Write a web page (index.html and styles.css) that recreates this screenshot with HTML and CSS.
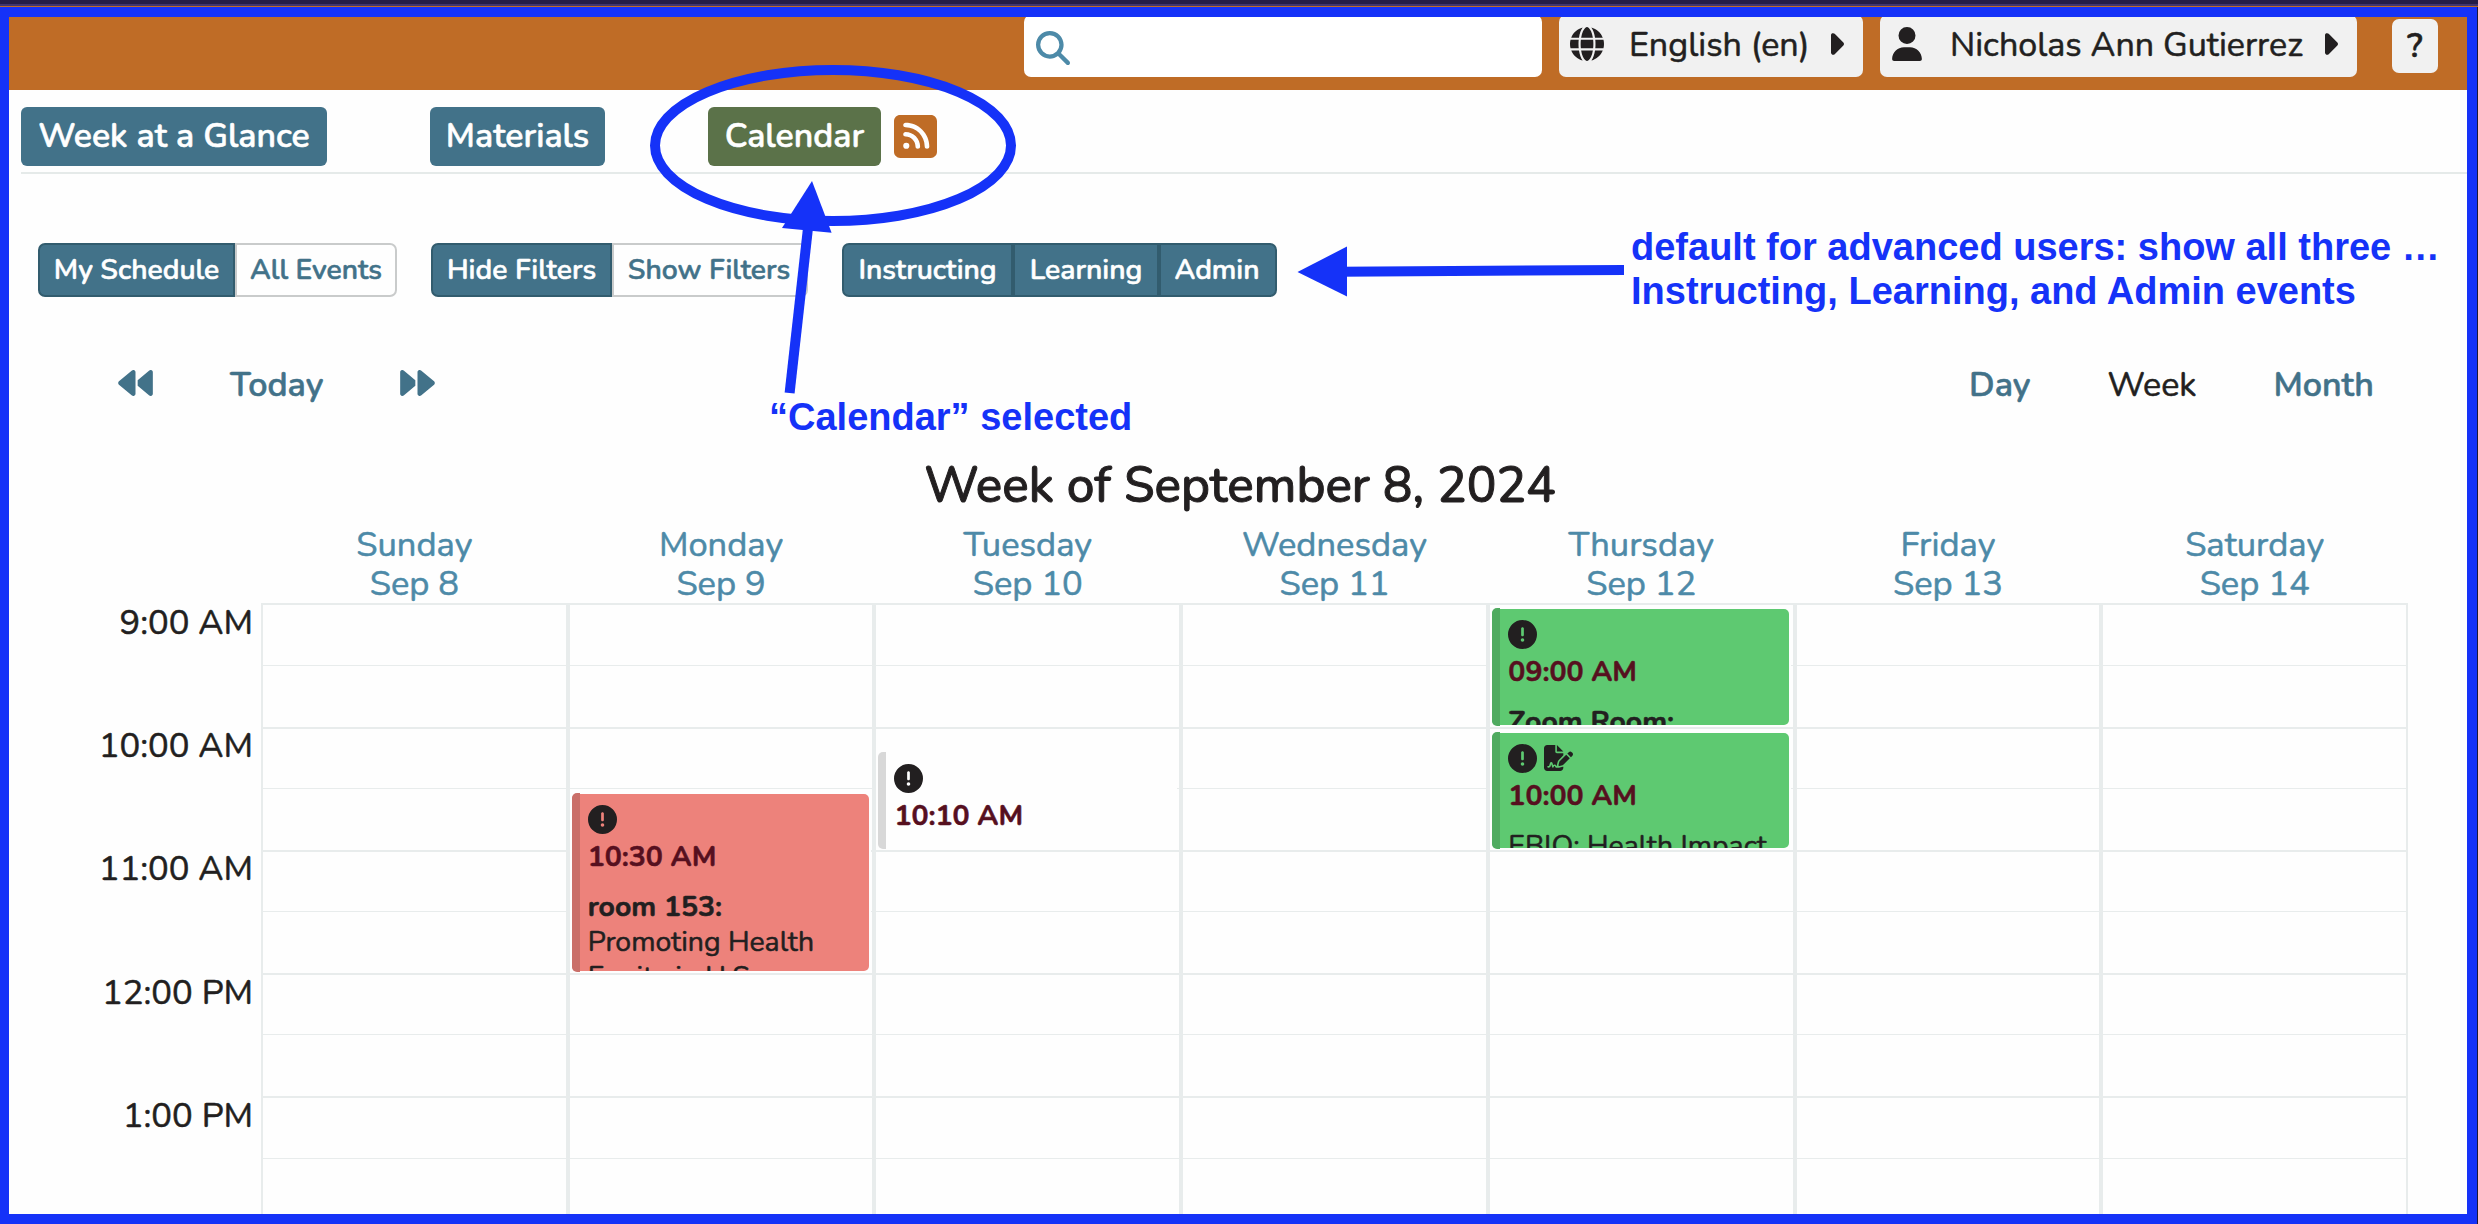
FILE: index.html
```html
<!DOCTYPE html>
<html lang="en">
<head>
<meta charset="utf-8">
<title>Calendar</title>
<link rel="stylesheet" href="styles.css">
</head>
<body>
<svg class="sprite" width="0" height="0" aria-hidden="true">
  <symbol id="search" viewBox="0 0 512 512"><path d="M416 208c0 45.9-14.9 88.3-40 122.7L502.6 457.4c12.5 12.5 12.5 32.8 0 45.3s-32.8 12.5-45.3 0L330.7 376c-34.4 25.2-76.8 40-122.7 40C93.1 416 0 322.9 0 208S93.1 0 208 0S416 93.1 416 208zM208 352a144 144 0 1 0 0-288 144 144 0 1 0 0 288z"/></symbol>
  <symbol id="globe" viewBox="0 0 512 512"><path d="M352 256c0 22.2-1.2 43.6-3.3 64H163.3c-2.2-20.4-3.3-41.8-3.3-64s1.2-43.6 3.3-64H348.7c2.2 20.4 3.3 41.8 3.3 64zm28.8-64H503.9c5.3 20.5 8.1 41.9 8.1 64s-2.8 43.5-8.1 64H380.8c2.1-20.6 3.2-42 3.2-64s-1.1-43.4-3.2-64zm112.6-32H376.7c-10-63.9-29.8-117.4-55.3-151.6c78.3 20.7 142 77.5 171.9 151.6zm-149.1 0H167.7c6.1-36.4 15.5-68.6 27-94.7c10.5-23.6 22.2-40.7 33.5-51.5C239.4 3.2 248.7 0 256 0s16.6 3.2 27.8 13.8c11.3 10.8 23 27.9 33.5 51.5c11.6 26 20.9 58.2 27 94.7zm-209 0H18.6C48.6 85.9 112.2 29.1 190.6 8.4C165.1 42.6 145.3 96.1 135.3 160zM8.1 192H131.2c-2.1 20.6-3.2 42-3.2 64s1.1 43.4 3.2 64H8.1C2.8 299.5 0 278.1 0 256s2.8-43.5 8.1-64zM194.7 446.6c-11.6-26-20.9-58.2-27-94.6H344.3c-6.1 36.4-15.5 68.6-27 94.6c-10.5 23.6-22.2 40.7-33.5 51.5C272.6 508.8 263.3 512 256 512s-16.6-3.2-27.8-13.8c-11.3-10.8-23-27.9-33.5-51.5zM135.3 352c10 63.9 29.8 117.4 55.3 151.6C112.2 482.9 48.6 426.1 18.6 352H135.3zm358.1 0c-30 74.1-93.6 130.9-171.9 151.6c25.5-34.2 45.2-87.7 55.3-151.6H493.4z"/></symbol>
  <symbol id="user" viewBox="0 0 448 512"><path d="M224 256A128 128 0 1 0 224 0a128 128 0 1 0 0 256zm-45.7 48C79.8 304 0 383.8 0 482.3C0 498.7 13.3 512 29.7 512H418.3c16.4 0 29.7-13.3 29.7-29.7C448 383.8 368.2 304 269.7 304H178.3z"/></symbol>
  <symbol id="caret" viewBox="64 96 192 320"><path d="M246.6 278.6c12.5-12.5 12.5-32.8 0-45.3l-128-128c-9.2-9.2-22.9-11.9-34.9-6.9s-19.8 16.6-19.8 29.6l0 256c0 12.9 7.8 24.6 19.8 29.6s25.7 2.2 34.9-6.9l128-128z"/></symbol>
  <symbol id="backward" viewBox="0 64 512 384"><path d="M459.5 440.6c9.5 7.9 22.8 9.7 34.1 4.4s18.4-16.6 18.4-29V96c0-12.4-7.2-23.7-18.4-29s-24.5-3.6-34.1 4.4L288 214.3V256v41.7L459.5 440.6zM256 352V256 128 96c0-12.4-7.2-23.7-18.4-29s-24.5-3.6-34.1 4.4l-192 160C4.2 237.5 0 246.5 0 256s4.2 18.5 11.5 24.6l192 160c9.5 7.9 22.8 9.7 34.1 4.4s18.4-16.6 18.4-29V352z"/></symbol>
  <symbol id="rss" viewBox="0 32 448 448"><path d="M64 32C28.7 32 0 60.7 0 96V416c0 35.3 28.7 64 64 64H384c35.3 0 64-28.7 64-64V96c0-35.3-28.7-64-64-64H64zM96 136c0-13.3 10.7-24 24-24c137 0 248 111 248 248c0 13.3-10.7 24-24 24s-24-10.7-24-24c0-110.5-89.5-200-200-200c-13.3 0-24-10.7-24-24zm0 96c0-13.3 10.7-24 24-24c83.9 0 152 68.1 152 152c0 13.3-10.7 24-24 24s-24-10.7-24-24c0-57.4-46.6-104-104-104c-13.3 0-24-10.7-24-24zm0 120a32 32 0 1 1 64 0 32 32 0 1 1 -64 0z"/></symbol>
  <symbol id="alert" viewBox="0 0 512 512"><path d="M256 512A256 256 0 1 0 256 0a256 256 0 1 0 0 512zm0-384c13.3 0 24 10.7 24 24V264c0 13.3-10.7 24-24 24s-24-10.7-24-24V152c0-13.3 10.7-24 24-24zM224 352a32 32 0 1 1 64 0 32 32 0 1 1 -64 0z"/></symbol>
  <symbol id="signature" viewBox="0 0 576 512"><path d="M64 0C28.7 0 0 28.7 0 64V448c0 35.3 28.7 64 64 64H320c35.3 0 64-28.7 64-64V428.7c-2.7 1.1-5.4 2-8.2 2.7l-60.1 15c-3 .7-6 1.2-9 1.4c-.9 .1-1.8 .2-2.7 .2H240c-6.1 0-11.6-3.4-14.3-8.8l-8.8-17.7c-1.7-3.4-5.1-5.5-8.8-5.5s-7.2 2.1-8.8 5.5l-8.8 17.7c-2.9 5.9-9.2 9.4-15.7 8.8s-12.1-5.1-13.9-11.3L144 381l-9.8 32.8c-6.1 20.3-24.8 34.2-46 34.2H80c-8.8 0-16-7.2-16-16s7.2-16 16-16h8.2c7.1 0 13.3-4.6 15.3-11.4l14.9-49.5c3.4-11.3 13.8-19.1 25.6-19.1s22.2 7.8 25.6 19.1l11.6 38.6c7.4-6.2 16.8-9.7 26.8-9.7c15.9 0 30.4 9 37.5 23.2l4.4 8.8h8.9c-3.1-8.8-3.7-18.4-1.4-27.8l15-60.1c2.8-11.3 8.6-21.5 16.8-29.7L384 203.6V160H256c-17.7 0-32-14.3-32-32V0H64zM256 0V128H384L256 0zM549.8 139.7c-15.6-15.6-40.9-15.6-56.6 0l-29.4 29.4 71 71 29.4-29.4c15.6-15.6 15.6-40.9 0-56.6l-14.4-14.4zM311.9 321c-4.1 4.1-7 9.2-8.4 14.9l-15 60.1c-1.4 5.5 .2 11.2 4.2 15.2s9.7 5.6 15.2 4.2l60.1-15c5.6-1.4 10.8-4.3 14.9-8.4L512.1 262.7l-71-71L311.9 321z"/></symbol>
</svg>

<div class="strip"></div>
<div class="frame">
  <header class="header">
    <div class="search"><svg class="icon-search"><use href="#search"/></svg></div>
    <button class="menu menu-lang"><svg class="icon-globe"><use href="#globe"/></svg><span class="menu-label">English (en)</span><svg class="icon-caret"><use href="#caret"/></svg></button>
    <button class="menu menu-user"><svg class="icon-user"><use href="#user"/></svg><span class="menu-label">Nicholas Ann Gutierrez</span><svg class="icon-caret"><use href="#caret"/></svg></button>
    <button class="help">?</button>
  </header>

  <nav class="nav">
    <a class="tab tab-week">Week at a Glance</a>
    <a class="tab tab-materials">Materials</a>
    <a class="tab tab-calendar">Calendar</a>
    <svg class="icon-rss"><use href="#rss"/></svg>
  </nav>

  <div class="filters">
    <div class="group">
      <span class="toggle on w-my">My Schedule</span><span class="toggle w-all">All Events</span>
    </div>
    <div class="group">
      <span class="toggle on w-hide">Hide Filters</span><span class="toggle w-show">Show Filters</span>
    </div>
    <div class="group">
      <span class="toggle on w-inst">Instructing</span><span class="toggle on w-learn">Learning</span><span class="toggle on w-admin">Admin</span>
    </div>
  </div>

  <div class="toolbar">
    <div class="pager">
      <svg class="icon-skip"><use href="#backward"/></svg>
      <a>Today</a>
      <svg class="icon-skip flip"><use href="#backward"/></svg>
    </div>
    <div class="views"><a>Day</a><span class="current">Week</span><a>Month</a></div>
  </div>

  <h1 class="title">Week of September 8, 2024</h1>

  <div class="days">
    <div>Sunday<br>Sep 8</div><div>Monday<br>Sep 9</div><div>Tuesday<br>Sep 10</div><div>Wednesday<br>Sep 11</div><div>Thursday<br>Sep 12</div><div>Friday<br>Sep 13</div><div>Saturday<br>Sep 14</div>
  </div>

  <div class="calendar">
    <div class="hours"><div>9:00 AM</div><div>10:00 AM</div><div>11:00 AM</div><div>12:00 PM</div><div>1:00 PM</div></div>
    <div class="week">
      <div class="day"><i></i><i></i><i></i><i></i><i></i><i></i><i></i><i></i><i></i><i></i></div>
      <div class="day"><i></i><i></i><i></i><i></i><i></i><i></i><i></i><i></i><i></i><i></i>
        <div class="event red mon"><div class="body">
          <div class="marks"><svg class="icon-alert"><use href="#alert"/></svg></div>
          <div class="time">10:30 AM</div>
          <div class="text"><b>room 153:</b><br>Promoting Health<br>Equity in U.S.</div>
        </div></div>
      </div>
      <div class="day"><i></i><i></i><i></i><i></i><i></i><i></i><i></i><i></i><i></i><i></i>
        <div class="event white tue"><div class="body">
          <div class="marks"><svg class="icon-alert"><use href="#alert"/></svg></div>
          <div class="time">10:10 AM</div>
        </div></div>
      </div>
      <div class="day"><i></i><i></i><i></i><i></i><i></i><i></i><i></i><i></i><i></i><i></i></div>
      <div class="day"><i></i><i></i><i></i><i></i><i></i><i></i><i></i><i></i><i></i><i></i>
        <div class="event green thu-9"><div class="body">
          <div class="marks"><svg class="icon-alert"><use href="#alert"/></svg></div>
          <div class="time">09:00 AM</div>
          <div class="text"><b>Zoom Room:</b></div>
        </div></div>
        <div class="event green thu-10"><div class="body">
          <div class="marks"><svg class="icon-alert"><use href="#alert"/></svg><svg class="icon-sign"><use href="#signature"/></svg></div>
          <div class="time">10:00 AM</div>
          <div class="text">EBIO: Health Impact</div>
        </div></div>
      </div>
      <div class="day"><i></i><i></i><i></i><i></i><i></i><i></i><i></i><i></i><i></i><i></i></div>
      <div class="day"><i></i><i></i><i></i><i></i><i></i><i></i><i></i><i></i><i></i><i></i></div>
    </div>
  </div>
</div>

<!-- Callouts drawn over the page -->
<svg class="callouts" viewBox="0 0 2478 1224">
  <ellipse cx="833" cy="145.5" rx="178" ry="75.5"/>
  <path d="M808 228L789.6 393"/>
  <path d="M1340 271.7L1624 270"/>
  <polygon points="812,181 782,228 831.6,232.8"/>
  <polygon points="1297.5,272 1347,246.5 1347,296.5"/>
</svg>
<div class="note note-selected">“Calendar” selected</div>
<div class="note note-default">default for advanced users: show all three …<br>Instructing, Learning, and Admin events</div>
</body>
</html>
```
FILE: styles.css
```css
* { box-sizing: border-box; }
html, body { margin: 0; height: 100%; overflow: hidden; }
body {
  position: relative;
  width: 2478px;
  height: 1224px;
  background: #1a1838;
  color: #221f20;
  font-family: Nunito, Lato, "Noto Sans", sans-serif;
  font-size: 34.5px;
  -webkit-text-stroke: .55px currentColor;
}
svg { display: block; fill: currentColor; flex: none; }
.sprite { position: absolute; }

.strip {
  height: 7px;
  background: linear-gradient(#241d47 4px, #40356f 4px 6px, #bf6c26 6px);
}
.frame {
  width: 2477px;
  height: 1217px;
  border: 10px solid #1532f8;
  border-left-width: 9px;
  background: #fefefe;
  overflow: hidden;
}

/* Header */
.header {
  display: flex;
  align-items: flex-start;
  gap: 17px;
  height: 73px;
  padding-left: 1015px;
  background: #bf6c26;
  overflow: hidden;
}
.search, .menu {
  display: flex;
  align-items: center;
  height: 62px;
  margin-top: -2px;
  border: 0;
  border-radius: 7px;
  background: #f1f1f1;
}
.search { width: 518px; padding-left: 12px; background: #fff; color: #4d8aa8; }
.icon-search { width: 34px; height: 34px; margin-top: 4px; }
.menu, .help {
  flex: none;
  color: #221f20;
  font: 400 34.1px Nunito, Lato, "Noto Sans", sans-serif;
  white-space: nowrap;
  -webkit-text-stroke: inherit;
}
.menu { padding: 0 19px 0 11px; }
.menu-lang { width: 304px; }
.menu-user { width: 477px; padding-left: 12px; }
.menu-label { margin: 0 auto 2px 0; }
.icon-globe { width: 34px; height: 34px; margin: 0 25px 4px 0; }
.icon-user { width: 30px; height: 34px; margin: 0 28px 4px 0; }
.icon-caret { width: 13px; height: 22px; margin-bottom: 4px; }
.help {
  width: 46px;
  height: 54px;
  margin: 2px 0 0 18px;
  padding: 0;
  border: 0;
  border-radius: 7px;
  background: #f1f1f1;
  font-weight: 600;
  line-height: 50px;
}

/* Navigation */
.nav {
  display: flex;
  height: 84px;
  margin-left: 12px;
  padding-top: 17px;
  border-bottom: 2px solid #e5eae9;
}
.tab {
  height: 59px;
  margin-right: 103px;
  border-radius: 6px;
  background: #427289;
  color: #fff;
  font-size: 33.9px;
  font-weight: 600;
  line-height: 58px;
  text-align: center;
  white-space: nowrap;
}
.tab-week { width: 306px; }
.tab-materials { width: 175px; }
.tab-calendar { width: 173px; margin-right: 13px; background: #5b7249; }
.icon-rss { width: 43px; height: 43px; margin-top: 8px; color: #bf6c26; }

/* Filter groups */
.filters {
  display: flex;
  gap: 34px;
  margin: 69px 0 0 29px;
}
.group { display: flex; }
.toggle {
  height: 54px;
  border: 2px solid #c9cbcb;
  background: #fefefe;
  color: #427289;
  font-size: 28.3px;
  font-weight: 600;
  line-height: 50px;
  text-align: center;
  white-space: nowrap;
}
.toggle.on { border-color: #325c6e; background: #427289; color: #fff; }
.toggle:first-child { border-radius: 7px 0 0 7px; }
.toggle:last-child { border-radius: 0 7px 7px 0; }
.w-my { width: 197px; }
.w-all { width: 162px; }
.w-hide { width: 181px; }
.w-show { width: 196px; padding-right: 2px; }
.w-inst { width: 171px; }
.w-learn { width: 146px; }
.w-admin { width: 118px; padding-right: 2px; }

/* Toolbar */
.toolbar {
  display: flex;
  justify-content: space-between;
  height: 40px;
  margin-top: 68px;
  padding: 0 93px 0 109px;
  color: #427289;
  font-size: 34.1px;
  font-weight: 600;
  line-height: 40px;
}
.pager { display: flex; gap: 77px; }
.icon-skip { width: 35px; height: 26px; margin-top: 5px; }
.flip { transform: scaleX(-1); }
.views { display: flex; gap: 77px; }
.current { color: #221f20; font-weight: 400; }

/* Week heading */
.title {
  height: 60px;
  margin: 51px 0 0;
  padding-left: 4px;
  font-size: 49.5px;
  font-weight: 500;
  line-height: 60px;
  text-align: center;
  -webkit-text-stroke-width: 1px;
}
.days {
  display: grid;
  grid-template-columns: repeat(7, 1fr);
  width: 2147px;
  margin: 8.5px 0 0 252px;
  color: #4d8aa8;
  line-height: 39px;
  text-align: center;
}

/* Calendar grid */
.calendar { display: flex; margin-top: .5px; }
.hours {
  width: 252px;
  padding-right: 8px;
  text-align: right;
  line-height: 39px;
}
.hours div { height: 123.2px; }
.week {
  display: grid;
  grid-template-columns: repeat(7, 1fr);
  width: 2147px;
}
.day {
  position: relative;
  display: grid;
  grid-template-rows: 62px 62px 61px 62px 61px 62px 61px 62px 62px 62px;
  border: solid #e8ecec;
  border-width: 0 2px;
}
.day i { border-top: 1px solid #e8ecec; }
.day i:nth-child(odd) { border-top-width: 2px; }

/* Events */
.event {
  position: absolute;
  left: 2px;
  width: 297px;
  border-radius: 5px;
  box-shadow: 0 0 0 2px #fefefe;
  font-size: 28.4px;
  line-height: 35px;
}
.event::before {
  content: "";
  position: absolute;
  inset: -1px auto -1px 0;
  width: 8px;
  border-radius: 5px 0 0 5px;
}
.body { height: 100%; padding: 11px 0 0 16px; overflow: hidden; white-space: nowrap; }
.marks { display: flex; gap: 7px; height: 29px; }
.icon-alert { width: 29px; height: 29px; }
.icon-sign { width: 29px; height: 26px; margin-top: 1px; }
.time { margin-top: 5px; color: #56101f; font-weight: 700; }
.text { margin-top: 15px; }
.text b { font-weight: 700; }
.red { background: #ed827b; }
.red::before { background: #ca6f69; }
.green { left: 2.5px; background: #5ec971; }
.green::before { background: #50ab60; }
.white { background: #fefefe; }
.white::before { background: #d8d8d8; }
.mon { top: 191px; height: 177px; }
.tue { top: 150px; height: 95px; }
.thu-9 { top: 6px; height: 116px; }
.thu-10 { top: 130px; height: 115px; }

/* Callouts */
.callouts { position: absolute; inset: 0; width: 2478px; height: 1224px; fill: #1532f8; }
.callouts ellipse, .callouts path { fill: none; stroke: #1532f8; stroke-width: 10px; }
.note {
  position: absolute;
  color: #1532f8;
  font: bold 38px/44px "Liberation Sans", Arial, sans-serif;
  white-space: nowrap;
  -webkit-text-stroke-width: 0;
}
.note-selected { left: 769px; top: 395px; }
.note-default { left: 1631px; top: 225px; }
```
